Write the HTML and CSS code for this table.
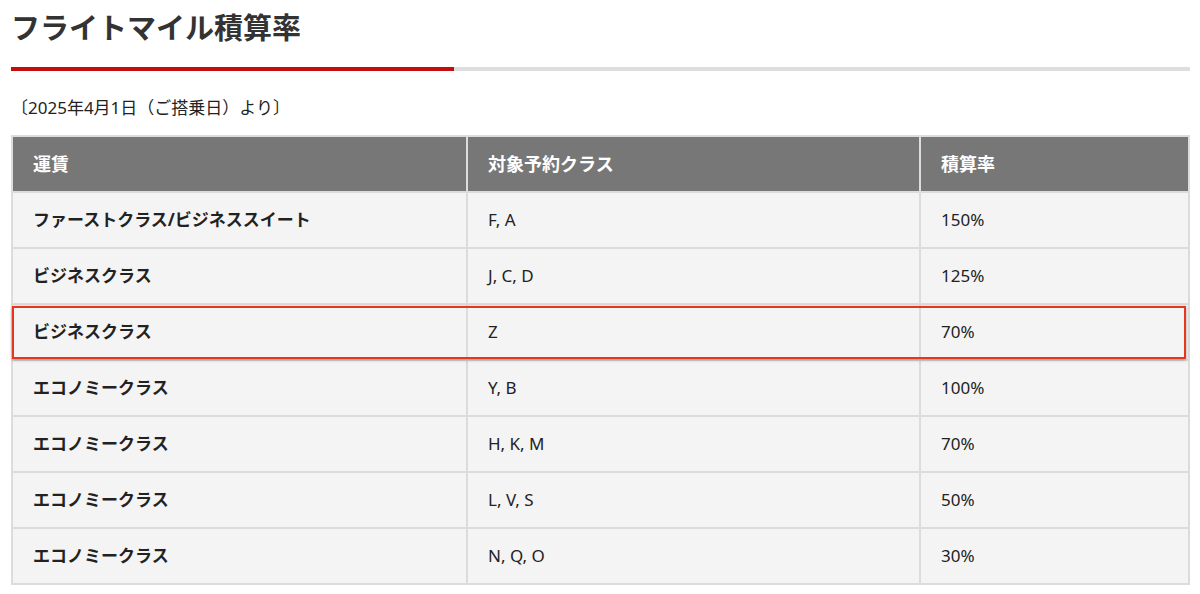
FILE: index.html
```html
<!DOCTYPE html>
<html lang="ja">
<head>
<meta charset="utf-8">
<link rel="stylesheet" href="styles.css">
</head>
<body>
<div class="page">
  <h1 class="title">フライトマイル積算率</h1>
  <div class="rule"><span class="rule-red"></span></div>
  <p class="note">〔2025年4月1日（ご搭乗日）より〕</p>
  <div class="table-wrap">
    <table class="rates">
      <colgroup>
        <col class="c1"><col class="c2"><col class="c3">
      </colgroup>
      <thead>
        <tr><th>運賃</th><th>対象予約クラス</th><th>積算率</th></tr>
      </thead>
      <tbody>
        <tr><td class="fare">ファーストクラス/ビジネススイート</td><td>F, A</td><td>150%</td></tr>
        <tr><td class="fare">ビジネスクラス</td><td>J, C, D</td><td>125%</td></tr>
        <tr><td class="fare">ビジネスクラス</td><td>Z</td><td>70%</td></tr>
        <tr><td class="fare">エコノミークラス</td><td>Y, B</td><td>100%</td></tr>
        <tr><td class="fare">エコノミークラス</td><td>H, K, M</td><td>70%</td></tr>
        <tr><td class="fare">エコノミークラス</td><td>L, V, S</td><td>50%</td></tr>
        <tr><td class="fare">エコノミークラス</td><td>N, Q, O</td><td>30%</td></tr>
      </tbody>
    </table>
    <div class="highlight"></div>
  </div>
</div>
</body>
</html>
```
FILE: styles.css
```css
html, body {
  margin: 0;
  padding: 0;
  background: #ffffff;
}
body {
  font-family: "Noto Sans", "Noto Sans CJK JP", sans-serif;
  color: #222222;
}
.page {
  width: 1179px;
  margin-left: 11px;
}
.title {
  margin: 0;
  padding-top: 10px;
  font-size: 29px;
  line-height: 36px;
  font-weight: 700;
  color: #333333;
}
.rule {
  margin-top: 21px;
  height: 4px;
  background: #dedede;
  display: flex;
}
.rule-red {
  width: 443px;
  height: 4px;
  background: #c40d0d;
}
.note {
  margin: 26px 0 0 0;
  font-size: 17px;
  line-height: 22px;
  color: #222222;
}
.table-wrap {
  margin-top: 16px;
  position: relative;
}
.rates {
  width: 100%;
  border-collapse: collapse;
  border: 2px solid #dcdcdc;
  table-layout: fixed;
}
.c1 { width: 455px; }
.c2 { width: 453px; }
.c3 { width: auto; }
.rates th, .rates td {
  height: 54px;
  padding: 0 20px;
  text-align: left;
  font-size: 17px;
  line-height: 22px;
  border: 2px solid #dcdcdc;
}
.rates th {
  background: #777777;
  color: #ffffff;
  font-weight: 700;
  font-size: 18px;
  border-color: #dcdcdc;
}
.rates td {
  background: #f4f4f4;
  color: #222222;
}
.rates td.fare {
  font-weight: 700;
}
.highlight {
  position: absolute;
  left: 1px;
  top: 171px;
  width: 1170px;
  height: 49px;
  border: 2px solid #e8351c;
  box-shadow: 0 1px 3px rgba(0,0,0,0.35);
  pointer-events: none;
}
```
